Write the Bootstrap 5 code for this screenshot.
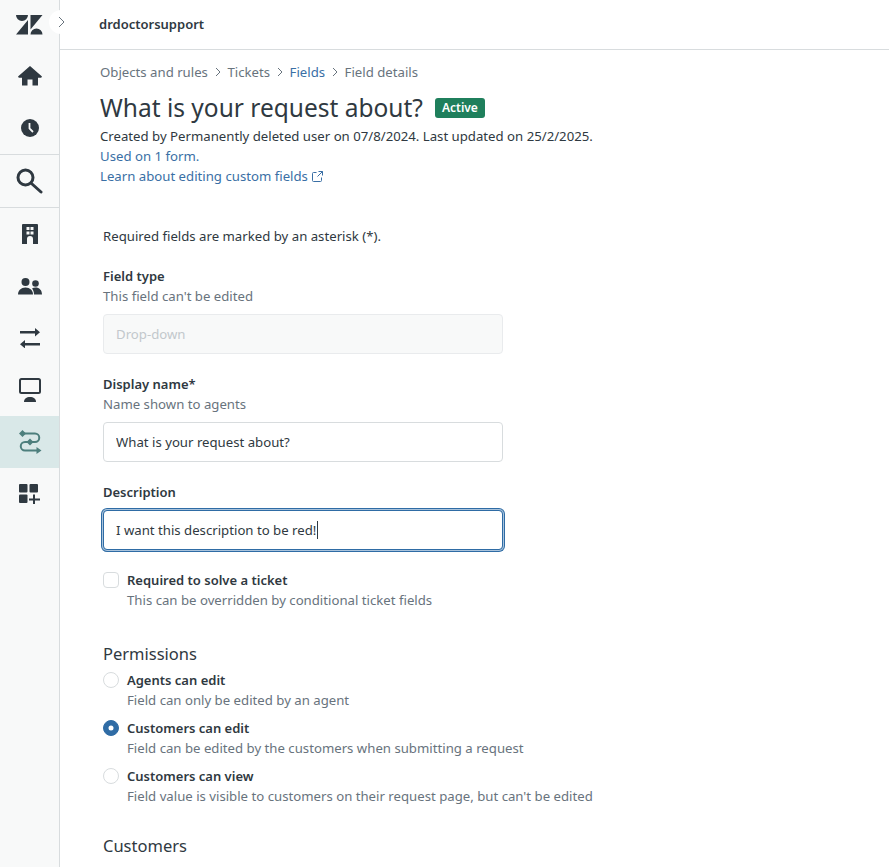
<!DOCTYPE html>
<html lang="en">
  <head>
    <meta charset="UTF-8">
    <meta name="viewport" content="width=device-width, initial-scale=1.0">
    <title>Field details</title>
    <link rel="stylesheet" href="https://cdn.jsdelivr.net/npm/bootstrap@5.3.0/dist/css/bootstrap.min.css">
    <style>
      html, body { height: 100%; overflow: hidden; }
      body { font-family: "Noto Sans", "Liberation Sans", sans-serif; font-size: 13.2px; line-height: 20px; color: #2f3941; }
      .side-rail { width: 60px; background: #f8f9f9; border-right: 1px solid #d8dcde; flex-shrink: 0; }
      .rail-logo { height: 50px; }
      .rail-item { height: 52px; color: #2f3941; }
      .rail-item svg { display: block; }
      .rail-line { border-top: 1px solid #d8dcde; border-bottom: 1px solid #d8dcde; height: 54px; }
      .rail-active { background: #d9e8e8; color: #4d7f7d; }
      .rail-toggle { position: absolute; left: 49px; top: 10px; width: 24px; height: 24px; background: #fff; color: #68737d; border-radius: 50%; }
      .top-strip { height: 50px; border-bottom: 1px solid #d8dcde; padding-left: 39px; padding-bottom: 2px; font-size: 13px; font-weight: 600; color: #2f3941; }
      .page-body { padding: 12px 0 0 40px; }
      .crumbs { height: 20px; color: #68737d; }
      .crumb-sep { width: 19.500px; color: #68737d; }
      .zd-link { color: #3a6fa5; text-decoration: none; }
      .page-title { font-family: inherit; font-size: 24.5px; line-height: 32px; font-weight: 400; margin: 10px 0 0; }
      .status-pill { background: #1f7f5c; color: #fff; font-size: 12px; line-height: 16px; font-weight: 600; padding: 2px 7px; border-radius: 3px; margin-left: 12px; }
      .meta-first { margin-top: 2px; }
      .field-area { width: 400px; margin: 40px 0 0 3px; }
      .field-label { font-size: 13px; font-weight: 600; margin: 0; display: block; }
      .field-gap { margin-top: 20px; }
      .field-hint { color: #68737d; }
      .zd-input { height: 40px; border: 1px solid #d8dcde; border-radius: 4px; padding: 0 12px; font-size: 13.2px; color: #2f3941; font-family: inherit; line-height: 20px; }
      .input-slot { margin-top: 8px; }
      .zd-input:disabled { background: #f8f9f9; color: #c2c8cc; border-color: #e9ebed; }
      .zd-focus, .zd-focus:focus { border-color: #2f6ca5; box-shadow: 0 0 0 1px #a9c3dc, 0 0 0 2px #2f6ca5; outline: 0; }
      .fake-caret { position: absolute; left: 214px; top: 11px; width: 1px; height: 18px; background: #2f3941; }
      .option-row { display: flex; padding: 0; margin: 0; min-height: 0; }
      .option-row.field-gap { margin-top: 20px; }
      .option-row.option-next { margin-top: 8px; }
      .option-row .form-check-input { width: 16px; height: 16px; margin: 2px 8px 0 0; float: none; border: 1px solid #d8dcde; flex-shrink: 0; }
      .option-row .form-check-input[type=checkbox] { border-radius: 4px; }
      .option-row .form-check-input:checked { background-color: #2f6ca5; border-color: #2f6ca5; background-size: 10px; background-position: center; background-repeat: no-repeat; }
      .section-title { font-size: 16.5px; line-height: 24px; font-weight: 400; font-family: inherit; margin: 0; }
      .title-perm { margin: 32px 0 4px; }
      .title-cust { margin-top: 28px; }
    </style>
  </head>
  <body class="d-flex position-relative">
    <!-- 左のサイドバー -->
    <nav class="side-rail d-flex flex-column">
      <div class="rail-logo d-flex align-items-center justify-content-center">
        <svg width="27" height="20" viewBox="0 0 27 20" fill="#2f3941"><path d="M0 0h12a6 6 0 0 1-12 0zM12 5v14.500H0zM14.500 0h12L14.500 14.500zM14.500 19.500a6 6 0 0 1 12 0z"/></svg>
      </div>
      <a class="rail-item d-flex align-items-center justify-content-center">
        <svg width="24" height="20" viewBox="0 0 24 20" fill="currentColor"><path d="M12 0 0 10.500l.8 1.200H4V19.500h5.500v-6h5v6H20v-7.800h3.200l.8-1.200z"/></svg>
      </a>
      <a class="rail-item d-flex align-items-center justify-content-center">
        <svg width="18" height="18" viewBox="0 0 18 18"><circle cx="9" cy="9" r="9" fill="currentColor"/><path d="M8.500 4v5.500l3.500 3.500" fill="none" stroke="#f8f9f9" stroke-width="1.800"/></svg>
      </a>
      <a class="rail-item rail-line d-flex align-items-center justify-content-center">
        <svg width="27" height="26" viewBox="0 0 27 26" fill="none" stroke="currentColor" stroke-width="3"><circle cx="9.500" cy="9.500" r="7.500"/><path d="m15.500 15.500 9.500 8.500" stroke-linecap="round"/></svg>
      </a>
      <a class="rail-item d-flex align-items-center justify-content-center">
        <svg width="16" height="20" viewBox="0 0 16 20"><path fill="currentColor" d="M1 0h14a1 1 0 0 1 1 1v19h-5v-5a3 3 0 0 0-6 0v5H0V1a1 1 0 0 1 1-1z"/><path fill="#f8f9f9" d="M4.500 3h3v3h-3zM8.500 3h3v3h-3zM4.500 7.500h3v3h-3zM8.500 7.500h3v3h-3z"/></svg>
      </a>
      <a class="rail-item d-flex align-items-center justify-content-center">
        <svg width="24" height="17" viewBox="0 0 24 17" fill="currentColor"><circle cx="7.500" cy="4" r="4"/><path d="M0 16.500c0-4 3-7 7.500-7s7.500 3 7.500 7z"/><circle cx="17.500" cy="5.500" r="3.300"/><path d="M16 16.500c0-2.500-.7-4.500-2-6 1-.6 2.200-.9 3.500-.9 3.800 0 6.500 2.700 6.500 6.900z"/></svg>
      </a>
      <a class="rail-item d-flex align-items-center justify-content-center">
        <svg width="22" height="20" viewBox="0 0 22 20" fill="currentColor"><path d="M1 3h15v2.400H1zM16 0l5 4.200-5 4.200zM6 15h15v2.400H6zM6 12l-5 4.200 5 4.200z"/></svg>
      </a>
      <a class="rail-item d-flex align-items-center justify-content-center">
        <svg width="22" height="24" viewBox="0 0 22 24"><rect x="1" y="1" width="20" height="14" rx="1.500" fill="none" stroke="currentColor" stroke-width="2"/><path d="M5 24c0-3.500 2.500-5 6-5s6 1.500 6 5z" fill="currentColor"/></svg>
      </a>
      <a class="rail-item rail-active d-flex align-items-center justify-content-center">
        <svg width="24" height="24" viewBox="0 0 24 24"><path d="M5 3.500h12a4.250 4.250 0 0 1 0 8.500H7a4.250 4.250 0 0 0 0 8.500h12" fill="none" stroke="currentColor" stroke-width="2"/><path fill="currentColor" d="M4.500 0 8 3.500 4.500 7 1 3.500zM12 8.500l3.500 3.500-3.500 3.500L8.500 12zM18.500 17l5 3.500-5 3.500z"/></svg>
      </a>
      <a class="rail-item d-flex align-items-center justify-content-center">
        <svg width="22" height="20" viewBox="0 0 22 20" fill="currentColor"><rect width="8.500" height="8.500" rx="1"/><rect x="10.500" width="8.500" height="8.500" rx="1"/><rect y="10.500" width="8.500" height="8.500" rx="1"/><path d="M14 10.500h2v4h5v2h-5v4h-2v-4h-4v-2h4z"/></svg>
      </a>
    </nav>
    <div class="rail-toggle d-flex align-items-center justify-content-center">
      <svg width="7" height="12" viewBox="0 0 7 12" fill="none" stroke="currentColor"><path d="m1 1 5 5-5 5"/></svg>
    </div>

    <div class="flex-grow-1">
      <header class="top-strip d-flex align-items-center">drdoctorsupport</header>
      <main class="page-body">
        <!-- パンくず -->
        <div class="crumbs d-flex align-items-center">
          <span>Objects and rules</span>
          <span class="crumb-sep d-flex justify-content-center"><svg width="6" height="10" viewBox="0 0 6 10" fill="none" stroke="currentColor"><path d="m1 1 4 4-4 4"/></svg></span>
          <span>Tickets</span>
          <span class="crumb-sep d-flex justify-content-center"><svg width="6" height="10" viewBox="0 0 6 10" fill="none" stroke="currentColor"><path d="m1 1 4 4-4 4"/></svg></span>
          <a class="zd-link">Fields</a>
          <span class="crumb-sep d-flex justify-content-center"><svg width="6" height="10" viewBox="0 0 6 10" fill="none" stroke="currentColor"><path d="m1 1 4 4-4 4"/></svg></span>
          <span>Field details</span>
        </div>
        <h1 class="page-title d-flex align-items-center">What is your request about? <span class="status-pill">Active</span></h1>
        <div class="meta-first">Created by Permanently deleted user on 07/8/2024. Last updated on 25/2/2025.</div>
        <div><a class="zd-link">Used on 1 form.</a></div>
        <div>
          <a class="zd-link d-inline-flex align-items-center gap-1">Learn about editing custom fields
            <svg width="11" height="11" viewBox="0 0 11 11" fill="none" stroke="currentColor"><path d="M4.500 1.500H1.500a1 1 0 0 0-1 1v7a1 1 0 0 0 1 1h7a1 1 0 0 0 1-1v-3M6.500.5h4v4M10.500.5l-5 5"/></svg>
          </a>
        </div>

        <form class="field-area">
          <div>Required fields are marked by an asterisk (*).</div>

          <label class="field-label field-gap" for="fieldType">Field type</label>
          <div class="field-hint">This field can't be edited</div>
          <div class="input-slot"><input id="fieldType" class="form-control zd-input" value="Drop-down" disabled></div>

          <label class="field-label field-gap" for="displayName">Display name*</label>
          <div class="field-hint">Name shown to agents</div>
          <div class="input-slot"><input id="displayName" class="form-control zd-input" value="What is your request about?"></div>

          <label class="field-label field-gap" for="desc">Description</label>
          <div class="input-slot position-relative">
            <input id="desc" class="form-control zd-input zd-focus" value="I want this description to be red!">
            <span class="fake-caret"></span>
          </div>

          <div class="form-check option-row field-gap">
            <input class="form-check-input" type="checkbox" id="req">
            <div><label class="field-label" for="req">Required to solve a ticket</label><div class="field-hint">This can be overridden by conditional ticket fields</div></div>
          </div>

          <h2 class="section-title title-perm">Permissions</h2>
          <div class="form-check option-row">
            <input class="form-check-input" type="radio" name="perm" id="p1">
            <div><label class="field-label" for="p1">Agents can edit</label><div class="field-hint">Field can only be edited by an agent</div></div>
          </div>
          <div class="form-check option-row option-next">
            <input class="form-check-input" type="radio" name="perm" id="p2" checked>
            <div><label class="field-label" for="p2">Customers can edit</label><div class="field-hint text-nowrap">Field can be edited by the customers when submitting a request</div></div>
          </div>
          <div class="form-check option-row option-next">
            <input class="form-check-input" type="radio" name="perm" id="p3">
            <div><label class="field-label" for="p3">Customers can view</label><div class="field-hint text-nowrap">Field value is visible to customers on their request page, but can't be edited</div></div>
          </div>

          <h2 class="section-title title-cust">Customers</h2>
        </form>
      </main>
    </div>
    <script src="https://cdn.jsdelivr.net/npm/bootstrap@5.3.0/dist/js/bootstrap.bundle.min.js"></script>
  </body>
</html>
